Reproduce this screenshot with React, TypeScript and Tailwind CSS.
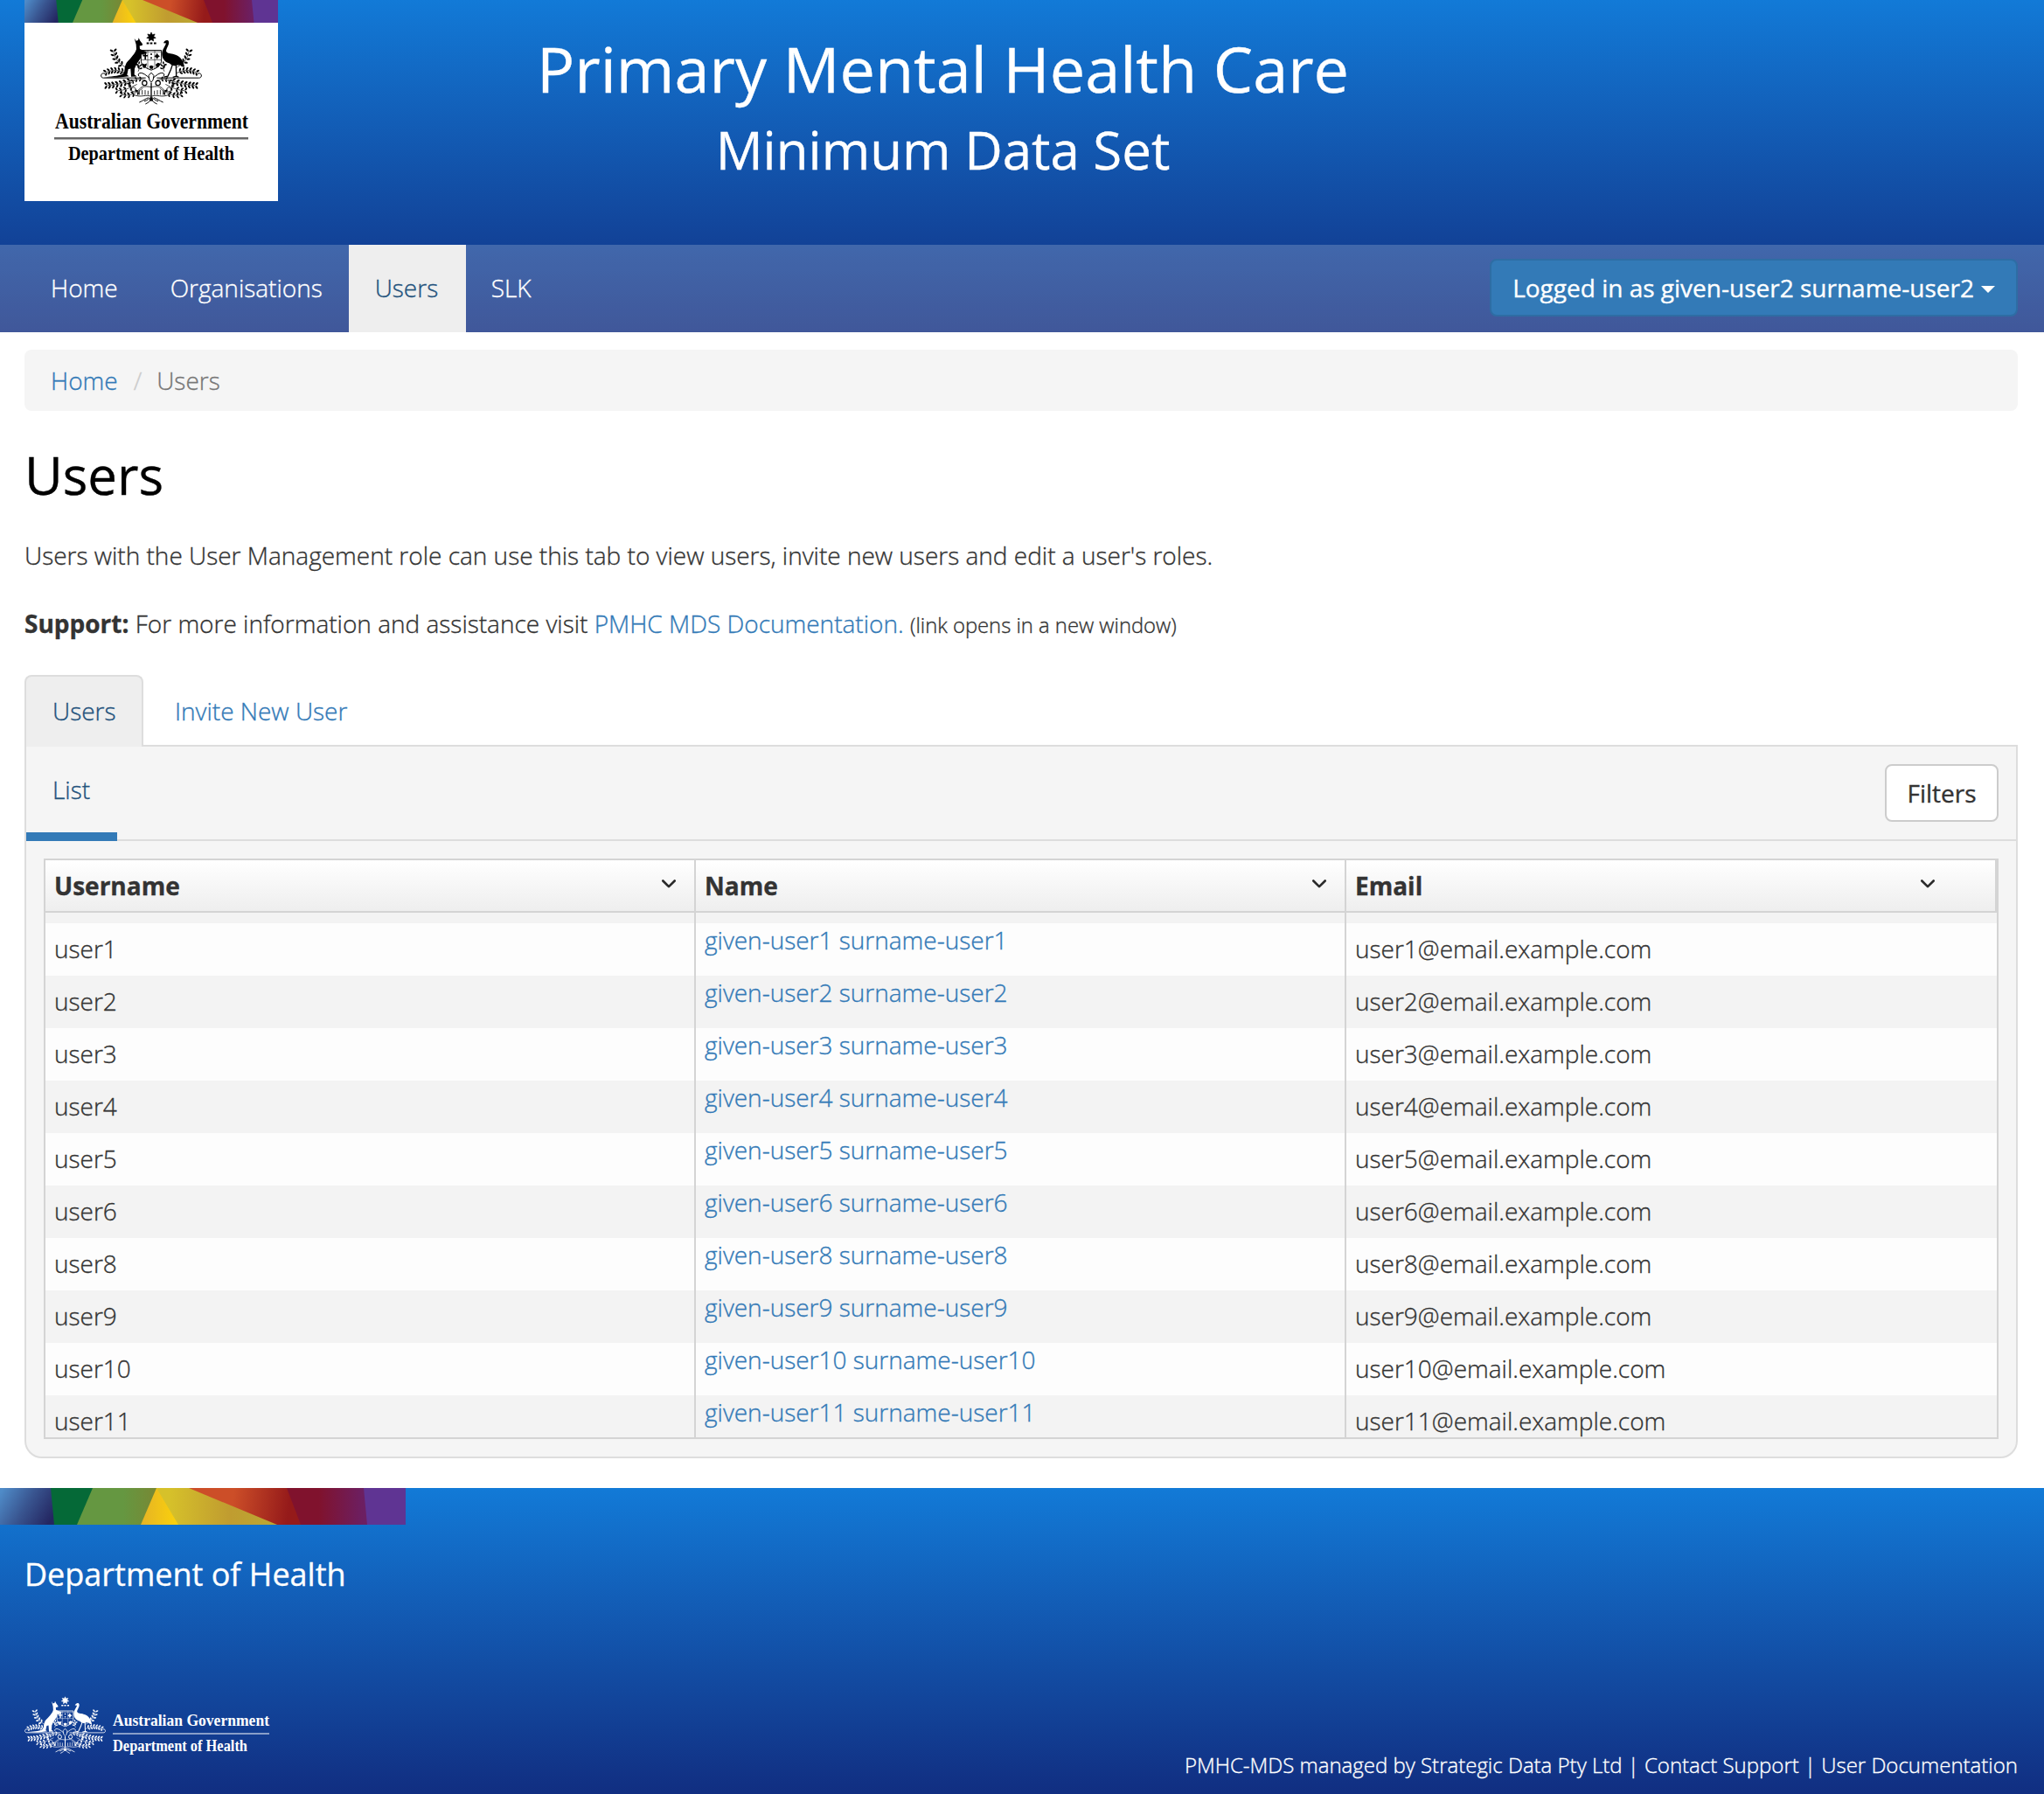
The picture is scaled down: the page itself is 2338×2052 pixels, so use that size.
import React from "react";

const SANS = "font-['Open_Sans','Noto_Sans',sans-serif]";

type Sprig = { x1: number; y1: number; cx: number; cy: number; x2: number; y2: number; n: number; size: number };

const leftSprigs: Sprig[] = [
  { x1: 432, y1: 232, cx: 396, cy: 214, x2: 390, y2: 178, n: 5, size: 8 },
  { x1: 434, y1: 252, cx: 400, cy: 234, x2: 366, y2: 248, n: 6, size: 7.5 },
  { x1: 462, y1: 274, cx: 410, cy: 292, x2: 368, y2: 294, n: 7, size: 8 },
  { x1: 470, y1: 290, cx: 430, cy: 312, x2: 404, y2: 312, n: 4, size: 7 },
  { x1: 490, y1: 304, cx: 450, cy: 334, x2: 420, y2: 326, n: 5, size: 7 },
  { x1: 500, y1: 276, cx: 468, cy: 264, x2: 446, y2: 288, n: 4, size: 6 },
  { x1: 474, y1: 246, cx: 484, cy: 232, x2: 476, y2: 222, n: 3, size: 6 },
];

function SprigShape({ s }: { s: Sprig }) {
  const leaves = [];
  for (let i = 1; i <= s.n; i++) {
    const t = i / s.n;
    const x = (1 - t) * (1 - t) * s.x1 + 2 * t * (1 - t) * s.cx + t * t * s.x2;
    const y = (1 - t) * (1 - t) * s.y1 + 2 * t * (1 - t) * s.cy + t * t * s.y2;
    const dx = 2 * (1 - t) * (s.cx - s.x1) + 2 * t * (s.x2 - s.cx);
    const dy = 2 * (1 - t) * (s.cy - s.y1) + 2 * t * (s.y2 - s.cy);
    const a = (Math.atan2(dy, dx) * 180) / Math.PI;
    for (const side of [-1, 1]) {
      leaves.push(
        <ellipse
          key={`${i}${side}`}
          cx={s.size}
          cy={0}
          rx={s.size * 0.8}
          ry={s.size * 0.42}
          transform={`translate(${x} ${y}) rotate(${a + side * 52})`}
          stroke="none"
        />,
      );
    }
  }
  return (
    <g>
      <path d={`M${s.x1} ${s.y1}Q${s.cx} ${s.cy} ${s.x2} ${s.y2}`} fill="none" strokeWidth="2" />
      {leaves}
    </g>
  );
}

function HalfFoliage() {
  return (
    <g>
      {leftSprigs.map((s, i) => (
        <SprigShape key={i} s={s} />
      ))}
      <g fill="none" strokeWidth="3">
        <path d="M500 268H356a8 8 0 1 1 4-14" />
        <path d="M519 272c-10-4-18-16-30-20s-18 4-12 10" />
        <path d="M519 300c-12-4-34-4-40 6s-28 14-28 2 18-8 14 2" strokeWidth="2.5" />
        <path d="M450 316c8 14 26 16 40 14s20-2 29 2" strokeWidth="2.5" />
        <path d="M478 312v14M488 310v16M498 310v16M508 312v14" strokeWidth="2.5" />
        <circle cx="496" cy="286" r="8" strokeWidth="3.500" />
        <path d="M519 334c-8 4-12 12-24 14M519 340c-4 8-8 12-20 18M510 336c-12 4-18 10-32 16" />
      </g>
    </g>
  );
}

/* Commonwealth coat of arms */
function CoatOfArms({ className, ground }: { className: string; ground: string }) {
  return (
    <svg viewBox="345 108 348 256" className={className} fill="currentColor" stroke="currentColor" preserveAspectRatio="none">
      <HalfFoliage />
      <g transform="translate(1038 0) scale(-1 1)">
        <HalfFoliage />
      </g>
      {/* shield */}
      <path d="M484 173h70v34c0 16-12 26-35 34-23-8-35-18-35-34z" fill={ground} strokeWidth="3" />
      <path d="M484 178h70M484 206h70M507 174v62M531 174v62" fill="none" strokeWidth="1.6" />
      <g stroke="none">
        <path d="M496 182h5v7h6v5h-6v10h-5v-10h-6v-5h6z" />
        <path d="M539 182l4 7 6 4-6 4-4 7-4-7-6-4 6-4z" />
        <circle cx="519" cy="186" r="3" />
        <circle cx="519" cy="199" r="3" />
        <path d="M488 218l8 3 8-3-3 12-7 5-6-9zM512 228l7-3 8 3-3 9h-9zM534 222l8-6 8 3-5 11-8 3z" />
      </g>
      <path d="M519 250l-9 10 3 16 6 6 6-6 3-16z" fill={ground} strokeWidth="3" />
      <path d="M519 284v48" fill="none" strokeWidth="4" />
      <circle cx="519" cy="342" r="6" stroke="none" />
      {/* kangaroo */}
      <path
        d="M461 131l6 9 7-2 2-8 5 10 8 11-1 5-9 2 1 10 13 6 10 3-1 9-7-2-2 5-8-3-2 14-7 10-8 12-6 14-1 20 9 7-20 1-2-28-8 2-4 20 7 4-40 5-48-1c24-3 52-4 66-12 10-8 4-18 10-31 2-10 12-16 18-24 8-10 16-18 19-30l-1-16z"
        stroke="none"
      />
      {/* emu */}
      <path
        d="M561 148c4-10 15-13 18-5 3 11-8 22-9 33 4 10 16 7 28 11 19 5 29 18 34 38-9 2-18-3-26 0-7 3-16 1-24-7-17-4-27-17-26-36 1-12 11-23 14-33z"
        stroke="none"
      />
      <path d="M592 222l-6 18-10 22-14 3M604 222l1 40-12 4M605 262l8 3" fill="none" strokeWidth="4" />
      {/* star and torse */}
      <path
        d="M519 111l3.700 8.300 8.800-2.400-4.200 8.100 7.400 5.300-8.900 1.800.8 9-7.600-5-7.600 5 .8-9-8.900-1.800 7.400-5.300-4.200-8.100 8.800 2.400z"
        strokeWidth="2"
      />
      <path d="M503 149h8M515 149h8M528 149h8" fill="none" strokeWidth="6" />
    </svg>
  );
}

function Rainbow({ id, className }: { id: string; className: string }) {
  return (
    <svg viewBox="0 0 464 42" preserveAspectRatio="none" className={className}>
      <defs>
        <linearGradient id={`${id}-blue`} gradientUnits="userSpaceOnUse" x1="0" y1="6" x2="56" y2="40">
          <stop offset="0" stopColor="#4f8bc8" />
          <stop offset="0.5" stopColor="#395590" />
          <stop offset="1" stopColor="#242661" />
        </linearGradient>
        <linearGradient id={`${id}-green`} gradientUnits="userSpaceOnUse" x1="88" y1="0" x2="179" y2="0">
          <stop offset="0.58" stopColor="#659741" />
          <stop offset="1" stopColor="#788834" />
        </linearGradient>
        <linearGradient id={`${id}-yellow`} gradientUnits="userSpaceOnUse" x1="161" y1="0" x2="204" y2="0">
          <stop offset="0" stopColor="#e5b325" />
          <stop offset="1" stopColor="#fbd20c" />
        </linearGradient>
        <linearGradient id={`${id}-olive`} gradientUnits="userSpaceOnUse" x1="180" y1="0" x2="317" y2="0">
          <stop offset="0.1" stopColor="#d6c12a" />
          <stop offset="0.6" stopColor="#c09c30" />
          <stop offset="1" stopColor="#bba833" />
        </linearGradient>
        <linearGradient id={`${id}-red`} gradientUnits="userSpaceOnUse" x1="216" y1="0" x2="344" y2="16">
          <stop offset="0.4" stopColor="#cc4e28" />
          <stop offset="0.9" stopColor="#951a1a" />
        </linearGradient>
        <linearGradient id={`${id}-maroon`} gradientUnits="userSpaceOnUse" x1="328" y1="0" x2="420" y2="0">
          <stop offset="0.4" stopColor="#80122d" />
          <stop offset="0.95" stopColor="#6c1f62" />
        </linearGradient>
      </defs>
      <rect width="464" height="42" fill="#5f3493" />
      <path d="M0 0H416L420 42H0z" fill={`url(#${id}-maroon)`} />
      <path d="M0 0H328L344 42H0z" fill={`url(#${id}-red)`} />
      <path d="M0 0H216L317 42H0z" fill={`url(#${id}-olive)`} />
      <path d="M0 0H179L204 42H0z" fill={`url(#${id}-yellow)`} />
      <path d="M0 0H179L161 42H0z" fill={`url(#${id}-green)`} />
      <path d="M0 0H106L88 42H0z" fill="#056937" />
      <path d="M0 0H58L62 42H0z" fill={`url(#${id}-blue)`} />
    </svg>
  );
}

function Chevron() {
  return (
    <svg viewBox="0 0 18 10" className="h-[10px] w-[18px]" fill="none" stroke="#2b2b2b" strokeWidth="2.600" strokeLinecap="round" strokeLinejoin="round">
      <path d="M2.300 1.500L9 8.200l6.700-6.700" />
    </svg>
  );
}

function Logo() {
  return (
    <div className="flex h-[230px] w-[290px] flex-col items-center bg-white text-black">
      <Rainbow id="top" className="h-[26px] w-full" />
      <CoatOfArms className="mt-[10px] h-[85px] w-[116px]" ground="#fff" />
      <svg viewBox="0 0 290 70" className="mt-[4px] h-[70px] w-[290px] overflow-visible" fontFamily="'Liberation Serif', serif" fontWeight="700">
        <text x="35" y="21.500" fontSize="24.500" textLength="221" lengthAdjust="spacingAndGlyphs">
          Australian Government
        </text>
        <rect x="34" y="32" width="222" height="2.500" fill="#666" />
        <text x="50" y="58" fontSize="23" textLength="190" lengthAdjust="spacingAndGlyphs">
          Department of Health
        </text>
      </svg>
    </div>
  );
}

const ids = [1, 2, 3, 4, 5, 6, 8, 9, 10, 11];

function HeaderCell({ label, className }: { label: string; className: string }) {
  return (
    <div className={`flex items-start justify-between pl-[10px] ${className}`}>
      <span className="mt-[9px] leading-[40px] font-bold">{label}</span>
      <span className="mt-[22px]">
        <Chevron />
      </span>
    </div>
  );
}

export default function App() {
  return (
    <div
      className={`flex h-[2052px] w-[2338px] flex-col bg-white text-[28px] leading-[40px] font-light text-[#333] [-webkit-text-stroke:0.35px] ${SANS}`}
    >
      <header className="flex h-[380px] flex-col bg-linear-to-b from-[#127ad7] to-[#112e81]">
        <div className="flex h-[280px] items-start pl-[28px] text-white">
          <Logo />
          <div className="flex w-[1521px] flex-col items-center gap-[20px] pt-[39px] font-normal">
            <h1 className="text-[72px] leading-[79px]">Primary Mental Health Care</h1>
            <h2 className="text-[60px] leading-[66px]">Minimum Data Set</h2>
          </div>
        </div>
        <nav className="flex h-[100px] items-center justify-between bg-white/20 px-[28px] pr-[30px] text-white">
          <div className="flex">
            <a className="px-[30px] pt-[29px] pb-[31px]">Home</a>
            <a className="w-[234px] pt-[29px] pb-[31px] pl-[30px]">Organisations</a>
            <a className="w-[134px] bg-[#eee] pt-[29px] pb-[31px] pl-[30px] text-[#23527c]">Users</a>
            <a className="pt-[29px] pr-[30px] pb-[31px] pl-[29px]">SLK</a>
          </div>
          <button className="mt-[-2px] flex h-[66px] items-center gap-[8px] rounded-[8px] border-2 border-[#2e6da4] bg-[#337ab7] px-[24px] font-normal">
            <span>Logged in as given-user2 surname-user2</span>
            <svg viewBox="0 0 16 8" className="mt-[4px] h-[8px] w-[16px]" fill="#fff">
              <path d="M0 0h16L8 8z" />
            </svg>
          </button>
        </nav>
      </header>

      <main className="flex h-[1322px] flex-col pr-[30px] pl-[28px]">
        <div className="mt-[20px] flex h-[70px] items-center rounded-[8px] bg-[#f5f5f5] px-[30px]">
          <a className="text-[#337ab7]">Home</a>
          <span className="pr-[17px] pl-[18px] text-[#ccc]">/</span>
          <span className="text-[#777]">Users</span>
        </div>

        <h2 className="mt-[40px] text-[60px] leading-[66px] font-normal text-black">Users</h2>
        <p className="mt-[39px]">Users with the User Management role can use this tab to view users, invite new users and edit a user's roles.</p>
        <p className="mt-[38px] h-[40px]">
          <b className="font-bold">Support:</b> For more information and assistance visit <a className="text-[#337ab7]">PMHC MDS Documentation.</a>{" "}
          <span className="text-[23.8px] leading-none">(link opens in a new window)</span>
        </p>

        <div className="relative z-10 mt-[39px] mb-[-2px] flex h-[82px]">
          <a className="mr-[6px] w-[136px] rounded-t-[8px] border-2 border-b-0 border-[#ddd] bg-[#eee] pt-[19px] pl-[30px] text-[#23527c]">Users</a>
          <a className="px-[30px] pt-[21px] text-[#337ab7]">Invite New User</a>
        </div>

        <section className="flex h-[816px] flex-col rounded-b-[20px] border-2 border-[#ddd] bg-[#f5f5f5]">
          <div className="flex h-[108px] justify-between border-b-2 border-[#ddd] pr-[20px]">
            <a className="h-[108px] w-[104px] border-b-[10px] border-[#337ab7] pt-[29px] pl-[30px] text-[#23527c]">List</a>
            <button className="mt-[20px] h-[66px] w-[130px] rounded-[8px] border-2 border-[#ccc] bg-white font-normal">Filters</button>
          </div>

          <div className="mx-[20px] mt-[20px] flex h-[664px] flex-col overflow-hidden border-2 border-[#d4d4d4]">
            <div className="grid h-[60px] shrink-0 grid-cols-3 border-b-2 border-[#d4d4d4] bg-linear-to-b from-white to-[#eee]">
              <HeaderCell label="Username" className="border-r-2 border-[#d4d4d4] pr-[20px]" />
              <HeaderCell label="Name" className="border-r-2 border-[#d4d4d4] pr-[20px]" />
              <HeaderCell label="Email" className="border-r-2 border-[#d4d4d4] pr-[68px]" />
            </div>
            <div className="grid h-[12px] shrink-0 grid-cols-3 bg-[#f3f3f3]">
              <div className="border-r-2 border-[#d4d4d4]" />
              <div className="border-r-2 border-[#d4d4d4]" />
            </div>
            {ids.map((n) => (
              <div key={n} className="grid h-[60px] shrink-0 grid-cols-3 odd:bg-[#fdfdfd] even:bg-[#f3f3f3]">
                <div className="border-r-2 border-[#d4d4d4] pt-[9px] pl-[10px]">user{n}</div>
                <div className="border-r-2 border-[#d4d4d4] pl-[10px] text-[#337ab7]">
                  <a className="mt-[-1px] block">
                    given-user{n} surname-user{n}
                  </a>
                </div>
                <div className="pt-[9px] pl-[10px]">user{n}@email.example.com</div>
              </div>
            ))}
          </div>
        </section>
      </main>

      <footer className="flex h-[350px] flex-col bg-linear-to-b from-[#127ad7] to-[#112e81] text-white">
        <Rainbow id="bottom" className="h-[42px] w-[464px]" />
        <div className="mt-[32px] pl-[28px] text-[36px] leading-[50px] font-normal">Department of Health</div>
        <div className="mt-[114px] flex items-start justify-between pr-[30px] pl-[28px]">
          <div className="flex gap-[8px]">
            <CoatOfArms className="h-[67px] w-[93px]" ground="#123d93" />
            <svg viewBox="0 0 190 74" className="h-[74px] w-[190px] overflow-visible" fill="#fff" fontFamily="'Liberation Serif', serif" fontWeight="700">
              <text x="0" y="34" fontSize="19" textLength="179" lengthAdjust="spacingAndGlyphs">
                Australian Government
              </text>
              <rect x="0" y="42" width="179" height="2" fillOpacity="0.5" />
              <text x="0" y="63" fontSize="18" textLength="154" lengthAdjust="spacingAndGlyphs">
                Department of Health
              </text>
            </svg>
          </div>
          <div className="mt-[62px] text-[24px] leading-[34px]">PMHC-MDS managed by Strategic Data Pty Ltd | Contact Support | User Documentation</div>
        </div>
      </footer>
    </div>
  );
}
